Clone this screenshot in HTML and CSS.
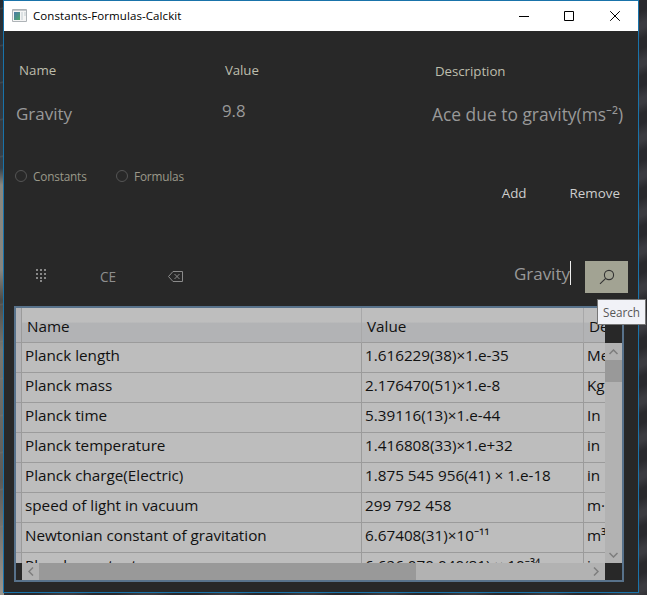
FILE: index.html
```html
<!DOCTYPE html>
<html lang="en">
<head>
<meta charset="utf-8">
<title>Constants-Formulas-Calckit</title>
<link rel="stylesheet" href="styles.css">
</head>
<body>
<main class="window">
  <header class="titlebar">
    <svg class="app-icon" width="15" height="13" viewBox="0 0 15 13"><defs><linearGradient id="app" x2="1" y2="1"><stop stop-color="#4b79a9"/><stop offset="1" stop-color="#4da76b"/></linearGradient></defs><path fill="#f5f5f5" stroke="#aeb3b7" d="M.5.5h14v12H.5z"/><path fill="#c3c7ca" d="M1 1h13v1H1z"/><path fill="url(#app)" d="M2 3h6v8H2z"/><path fill="#dce1e3" d="M9 3h2v8H9zM12 3h2v4h-2z"/></svg>
    <h1 class="title">Constants-Formulas-Calckit</h1>
    <svg class="controls" width="104" height="10" viewBox="0 0 104 10" fill="none" stroke="#000"><path d="M0 5.5h10M45.500 .5h9v9h-9z"/><path d="m91.200.2 9.600 9.600m0-9.600-9.600 9.600"/></svg>
  </header>
  <section class="fields">
    <div class="field"><label class="label">Name</label><span class="entry">Gravity</span></div>
    <div class="field field-value"><label class="label">Value</label><span class="entry">9.8</span></div>
    <div class="field field-description"><label class="label">Description</label><span class="entry">Ace due to gravity(ms⁻²)</span></div>
  </section>
  <section class="options">
    <label class="choice"><i class="ring"></i><span>Constants</span></label>
    <label class="choice"><i class="ring"></i><span>Formulas</span></label>
    <span class="action add">Add</span><span class="action">Remove</span>
  </section>
  <section class="tools">
    <svg class="keypad" width="10" height="13" viewBox="0 0 10 13" fill="#888"><path d="M0 0h2v2H0zM4 0h2v2H4zM8 0h2v2H8zM0 4h2v2H0zM4 4h2v2H4zM8 4h2v2H8zM0 8h2v2H0zM4 8h2v2H4zM8 8h2v2H8zM4 11h2v2H4z"/></svg>
    <span class="clear">CE</span>
    <svg class="backspace" width="15" height="11" viewBox="0 0 15 11" fill="none" stroke="#8b8b8b"><path d="M5 .5h9.500v10H5l-4.500-5zM6.500 3l5 5m0-5-5 5"/></svg>
    <span class="query">Gravity</span><i class="caret"></i>
    <div class="search"><svg width="16" height="16" viewBox="0 0 16 16" fill="none" stroke="#333" stroke-width="1.100"><circle cx="10" cy="6" r="4.600"/><path d="m6.700 9.300-5.700 5.500"/></svg><span class="tooltip">Search</span></div>
  </section>
  <section class="table">
    <div class="content">
      <div class="row head"><i></i><b>Name</b><b>Value</b><b>Description</b></div>
      <div class="row"><i></i><span>Planck length</span><span>1.616229(38)×1.e-35</span><span>Meter</span></div>
      <div class="row"><i></i><span>Planck mass</span><span>2.176470(51)×1.e-8</span><span>Kg</span></div>
      <div class="row"><i></i><span>Planck time</span><span>5.39116(13)×1.e-44</span><span>In</span></div>
      <div class="row"><i></i><span>Planck temperature</span><span>1.416808(33)×1.e+32</span><span>in</span></div>
      <div class="row"><i></i><span>Planck charge(Electric)</span><span>1.875 545 956(41) × 1.e-18</span><span>in</span></div>
      <div class="row"><i></i><span>speed of light in vacuum</span><span>299 792 458</span><span>m·s</span></div>
      <div class="row"><i></i><span>Newtonian constant of gravitation</span><span>6.67408(31)×10⁻¹¹</span><span>m³</span></div>
      <div class="row"><i></i><span>Planck constant</span><span>6.626 070 040(81) × 10⁻³⁴</span><span>in</span></div>
    </div>
    <div class="vertical"><svg width="9" height="6" viewBox="0 0 9 6"><path d="m.5 5 4-4 4 4"/></svg><i class="v-thumb"></i><svg class="down" width="9" height="6" viewBox="0 0 9 6"><path d="m.5 1 4 4 4-4"/></svg></div>
    <div class="horizontal"><svg width="6" height="9" viewBox="0 0 6 9"><path d="m5 .5-4 4 4 4"/></svg><i class="h-thumb"></i><svg class="right" width="6" height="9" viewBox="0 0 6 9"><path d="m1 .5 4 4-4 4"/></svg></div>
  </section>
</main>
</body>
</html>
```
FILE: styles.css
```css
* { box-sizing: border-box; }
body {
  margin: 0;
  height: 595px;
  overflow: hidden;
  padding-left: 3px;
  font-family: "Open Sans", "Noto Sans", sans-serif;
  background:
    linear-gradient(170deg, transparent 0 20%, #8883 22% 24%, transparent 27% 100%) 0 0 / 3px 37px repeat-y,
    linear-gradient(#242c34 0, #363c42 140px, #35414b 168px, #89877f 185px, #858580 270px, #4d4c48 300px, #777771 350px, #5b5a57 480px, #999690 100%) 0 0 / 4px 100% no-repeat,
    repeating-linear-gradient(155deg, #29292d 0 9px, #3b3b40 20px 25px, #29292d 34px);
}
.window { width: 636px; height: 593px; border: 1px solid #1973aa; background: #282828; }
.titlebar { height: 30px; display: flex; align-items: center; background: #fff; padding: 0 15px 0 8px; }
.app-icon { margin-bottom: 1px; }
.title { margin: 0 0 0 6px; font-size: 11.5px; line-height: 18px; font-weight: 400; color: #000; letter-spacing: .08px; }
.controls { margin-left: auto; }
.fields { height: 129px; display: grid; grid-template-columns: 206px 210px 1fr; padding: 28px 0 0 12px; }
.field { display: flex; flex-direction: column; }
.label { margin-left: 3px; height: 22px; line-height: 22px; font-size: 13.3px; color: #bdbdac; }
.entry { margin-top: 19px; line-height: 28px; font-size: 17px; color: #999; white-space: nowrap; }
.field-value .label { letter-spacing: -.1px; }
.field-value .entry { margin-top: 16px; font-size: 16.800px; }
.field-description .label { margin-top: 1px; letter-spacing: -.05px; }
.field-description .entry { margin-top: 18px; font-size: 17.400px; }
.options { height: 70px; display: flex; align-items: flex-start; padding: 7px 18px 0 11px; }
.choice { display: flex; align-items: center; gap: 6px; width: 101px; height: 18px; font-size: 11.800px; letter-spacing: -.18px; color: #9b998a; }
.ring { width: 12px; height: 12px; border: 1px solid #555; border-radius: 50%; }
.action { margin-top: 16px; font-size: 13.4px; line-height: 20px; color: #cecece; }
.add { margin-left: auto; margin-right: 43px; }
.tools { height: 76px; display: flex; align-items: flex-start; padding: 31px 10px 0 32px; }
.keypad { margin-top: 8px; }
.clear { margin: 6px 0 0 54px; font-size: 13.6px; line-height: 20px; color: #8e8e8e; }
.backspace { margin: 10px 0 0 52px; }
.query { margin-left: auto; line-height: 26px; font-size: 17px; color: #999; }
.caret { width: 1px; height: 24px; background: #eee; }
.search { position: relative; width: 43px; height: 32px; margin-left: 14px; display: grid; place-items: center; background: #a2a393; }
.tooltip { position: absolute; z-index: 2; left: 12px; top: 38px; width: 49px; height: 26px; border: 1px solid #767676; background: #f1f2f7; color: #575757; font-size: 11.7px; line-height: 25px; text-align: center; }
.table { width: 610px; height: 276px; margin-left: 10px; border: 2px solid #58728b; display: grid; grid-template: 255px 17px / 589px 17px; background: #282828; }
.content { overflow: hidden; background: #bdbdbd; }
.row { width: 700px; height: 30px; display: grid; grid-template-columns: 6px 340px 222px 1fr; font-size: 15.25px; line-height: 25px; color: #111; }
.row > * { border-right: 1px solid #9b9b9b; border-bottom: 1px solid #9b9b9b; padding-left: 3px; white-space: nowrap; overflow: hidden; }
.row > i { padding: 0; background: #b4b4b7; }
.row.head { height: 35px; line-height: 37px; background: linear-gradient(#bebebe 0 41%, #b2b3b5 42% 100%); }
.head > b { font-weight: 400; padding-left: 5px; border-right-color: #a8a8a9; }
.vertical { margin-top: 35px; background: #b2b2b2; display: flex; flex-direction: column; align-items: center; padding: 6px 0 5px; }
.vertical svg, .horizontal svg { fill: none; stroke: #7d7d7d; stroke-width: 1.5px; }
.v-thumb { width: 17px; height: 22px; margin-top: 5px; background: #999; }
.down { margin-top: auto; }
.horizontal { margin-left: 6px; background: #b2b2b2; display: flex; align-items: center; padding: 0 6px; }
.h-thumb { width: 377px; height: 17px; margin-left: 5px; background: #999; }
.right { margin-left: auto; }
```
